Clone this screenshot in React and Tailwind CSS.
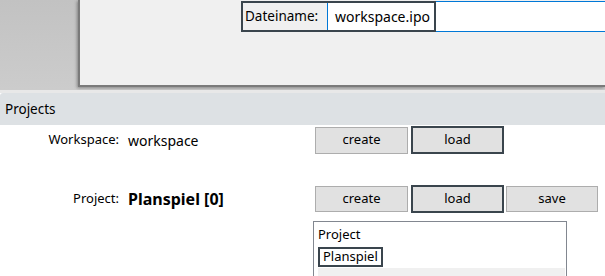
export default function App() {
  const btn =
    "flex items-center justify-center bg-[#e1e1e1] text-[13px] text-black";
  return (
    <div className="w-[605px] h-[276px] overflow-hidden bg-white font-['Noto_Sans','Open_Sans',sans-serif] text-black">
      {/* background behind dialog */}
      <div className="h-[90px] bg-gradient-to-b from-[#c2c2c2] to-[#cccccc]">
        <div className="ml-[78px] h-[87px] bg-[#f0f0f0] border-l-2 border-b-2 border-[#7a7a7a] shadow-[-1px_1px_3px_rgba(0,0,0,0.35)]">
          <div className="relative ml-[161px] flex h-[32px]">
            <div className="mt-[1px] h-[31px] w-[86px] flex items-center pl-[4px] text-[13.5px] bg-[#f0f0f0]">
              Dateiname:
            </div>
            <div className="mt-[1px] h-[31px] flex-1 flex items-center bg-white border border-[#0078d7] border-r-0 pl-[7px] text-[14px]">
              workspace.ipo
            </div>
            <div className="pointer-events-none absolute left-0 top-[1px] h-[31px] w-[195px] border-2 border-[#3a454d]" />
          </div>
        </div>
      </div>
      <div className="h-[3px] bg-[#e8e8e8]" />
      {/* header */}
      <div className="h-[32px] bg-[#dde1e4] rounded-tl-[3px] flex items-center pl-[5px] text-[13.5px]">
        Projects
      </div>
      {/* rows */}
      <div className="flex items-center h-[28px] mt-[1px]">
        <div className="w-[120px] text-right text-[13px] pr-[1px]">Workspace:</div>
        <div className="w-[194px] pl-[8px] text-[14px]">workspace</div>
        <div className="flex items-center gap-[3px]">
          <div className={`${btn} w-[93px] h-[27px] border border-[#adadad] ml-[1px]`}>create</div>
          <div className={`${btn} w-[93px] h-[28px] border-2 border-[#3a454d]`}>load</div>
        </div>
      </div>
      <div className="flex items-center h-[28px] mt-[31px]">
        <div className="w-[120px] text-right text-[13px] pr-[1px]">Project:</div>
        <div className="w-[194px] pl-[8px] text-[16px] font-bold">Planspiel [0]</div>
        <div className="flex items-center">
          <div className={`${btn} w-[93px] h-[26px] border border-[#adadad] ml-[1px]`}>create</div>
          <div className={`${btn} w-[93px] h-[28px] border-2 border-[#3a454d] ml-[3px]`}>load</div>
          <div className={`${btn} w-[92px] h-[26px] border border-[#adadad] ml-[2px]`}>save</div>
        </div>
      </div>
      <div className="ml-[313px] mt-[8px] w-[254px] h-[80px] border border-[#828790] bg-white">
        <div className="h-[25px] flex items-center pl-[4px] text-[13px]">Project</div>
        <div className="ml-[4px] w-[65px] h-[20px] border-2 border-[#3a454d] flex items-center pl-[3px] text-[13px]">
          Planspiel
        </div>
        <div className="ml-[4px] mr-[1px] mt-[1px] h-[20px] bg-[#f0f0f0]" />
      </div>
    </div>
  );
}
